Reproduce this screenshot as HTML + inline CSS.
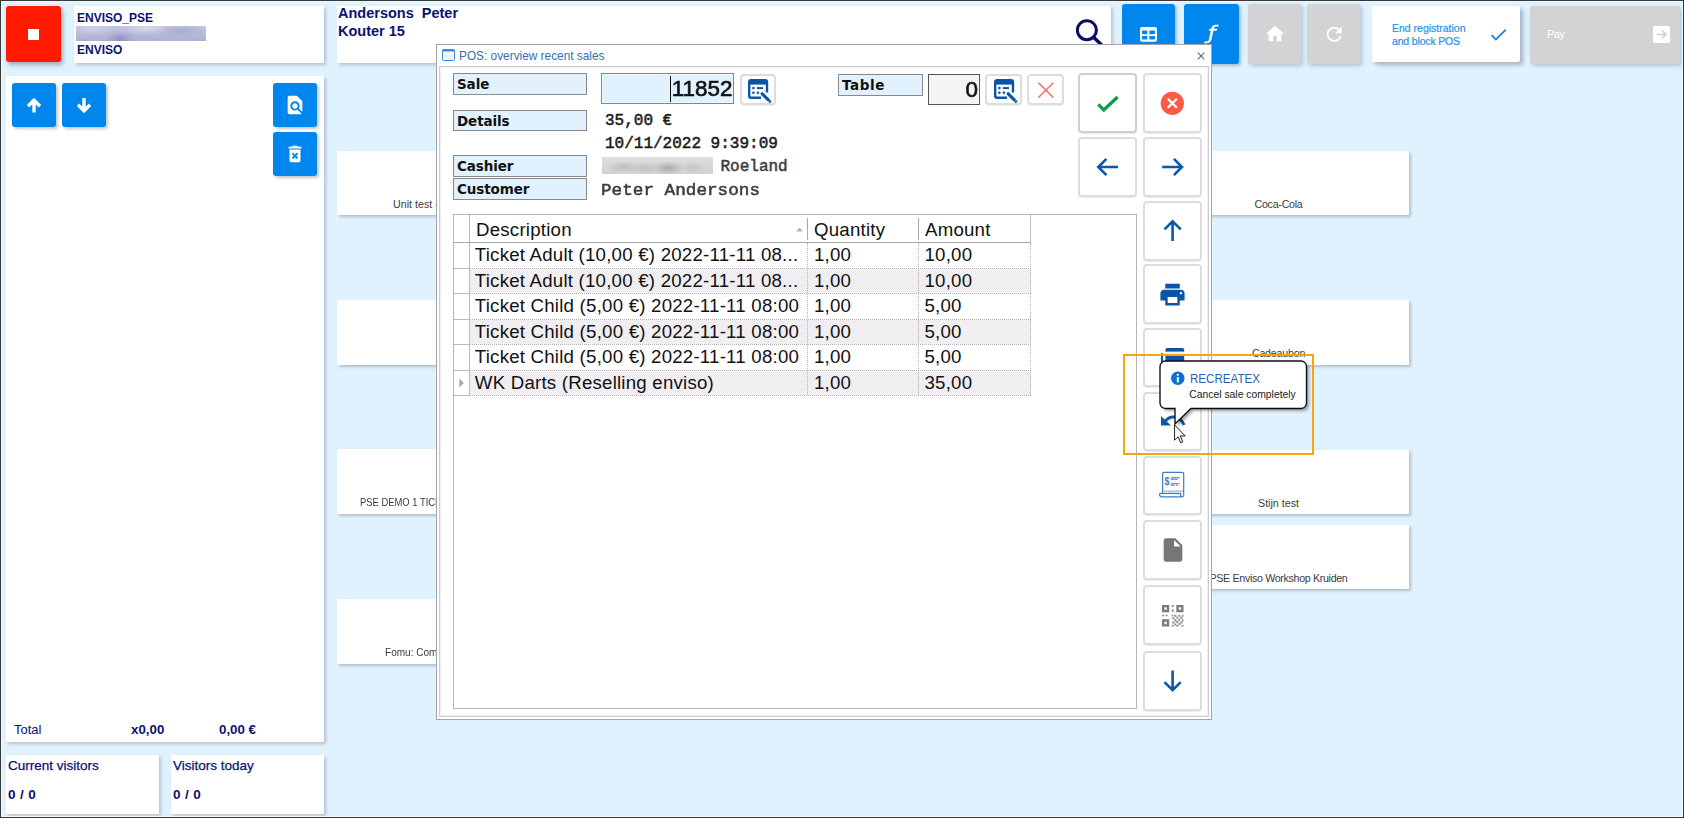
<!DOCTYPE html>
<html lang="en">
<head>
<meta charset="utf-8">
<title>POS: overview recent sales</title>
<style>
html,body{margin:0;padding:0;}
body{width:1684px;height:818px;overflow:hidden;background:#e0f2fe;font-family:"Liberation Sans",sans-serif;position:relative;}
.a{position:absolute;box-sizing:border-box;}
#frame{left:0;top:0;width:1684px;height:818px;border:1px solid #3a3837;box-shadow:inset 0 0 0 1px #eafbff;z-index:50;pointer-events:none;}
.card{background:#fff;box-shadow:2px 2px 3px rgba(80,88,100,.3);}
.bbtn{background:#0087ee;border-radius:3px;box-shadow:2px 2px 3px rgba(60,70,90,.3);}
.gbtn{background:#d3d2d5;border-radius:3px;box-shadow:2px 2px 4px rgba(80,100,130,.32);}
.navy{color:#0b1270;}
.tile{background:#fff;border-radius:1px;box-shadow:2px 2px 3px rgba(80,88,100,.32);font-size:10.700px;color:#3c3c3c;text-align:center;}
.tile span{position:absolute;left:0;right:0;bottom:5px;white-space:nowrap;}
svg{display:block;position:absolute;overflow:visible;}
/* dialog */
#dlg{left:436px;top:44px;width:776px;height:676px;background:#fff;border:1px solid #a2a4ab;}
#dlgin{left:2px;top:21px;width:770px;height:651px;border:1px solid #cdccd0;box-shadow:inset 0 0 0 1px #f0eff1;background:#fff;}
.lbl{background:#e1f2fe;border:1px solid #88888d;font-family:"DejaVu Sans",sans-serif;font-weight:bold;font-size:13.500px;color:#111;padding-left:3px;line-height:21px;white-space:nowrap;letter-spacing:-.1px;}
.mono{font-family:"Liberation Mono",monospace;font-weight:normal;font-size:16px;white-space:pre;color:#1a1a1a;line-height:18px;-webkit-text-stroke:.5px currentColor;}
.sbtn{background:#fff;border:2px solid #dddcdf;border-radius:4px;box-shadow:0 1px 0 rgba(0,0,0,.06);}
.big{background:#fff;border:2px solid #dddcdf;border-radius:4px;box-shadow:0 1px 0 rgba(0,0,0,.08);}
#grid{left:453px;top:214px;width:684px;height:495px;border:1px solid #b6b6b8;background:#fff;}
.gr{font-size:18.670px;color:#111;white-space:nowrap;line-height:25px;letter-spacing:.22px;}
</style>
</head>
<body>
<div class="a" id="frame"></div>
<!-- TOP BAR -->
<div class="a" id="stop" style="left:6px;top:6px;width:55px;height:56px;background:#ff1a00;border-radius:3px;box-shadow:2px 3px 4px rgba(60,70,90,.4);">
  <div class="a" style="left:22px;top:23px;width:11px;height:11px;background:#fff;"></div>
</div>
<div class="a card" style="left:74px;top:6px;width:250px;height:57px;">
  <div class="a navy" style="left:3px;top:5px;font-weight:bold;font-size:12px;line-height:14px;white-space:nowrap;">ENVISO_PSE</div>
  <div class="a" style="left:2px;top:20px;width:130px;height:15px;background:radial-gradient(ellipse 15px 10px at 44px 14px,#9193c1 0%,rgba(145,147,193,0) 100%),radial-gradient(ellipse 22px 7px at 70px 2px,#d8daeb 0%,rgba(216,218,235,0) 100%),radial-gradient(ellipse 20px 6px at 18px 3px,#cfd1e6 0%,rgba(207,209,230,0) 100%),radial-gradient(ellipse 24px 7px at 106px 5px,#a9abd0 0%,rgba(169,171,208,0) 100%),linear-gradient(180deg,#c3c5e0,#aeb0d3);"></div>
  <div class="a navy" style="left:3px;top:37px;font-weight:bold;font-size:12px;line-height:14px;white-space:nowrap;">ENVISO</div>
</div>
<div class="a card" style="left:337px;top:6px;width:774px;height:57px;">
  <div class="a navy" style="left:1px;top:-1px;font-weight:bold;font-size:14.500px;line-height:17.500px;white-space:pre;">Andersons  Peter
Kouter 15</div>
  <svg style="left:735px;top:10px;" width="36" height="36" viewBox="0 0 36 36"><circle cx="14.850" cy="14.200" r="9.500" fill="none" stroke="#0b0b6b" stroke-width="2.950"/><path d="M21.600 21.200 L32 31.200" stroke="#0b0b6b" stroke-width="3.500" fill="none"/></svg>
</div>
<div class="a bbtn" style="left:1122px;top:4px;width:53px;height:60px;">
  <svg style="left:18px;top:23.200px;" width="17" height="15" viewBox="0 0 17 15"><path fill="#fff" fill-rule="evenodd" d="M2 0h13a2 2 0 0 1 2 2v10.700a2 2 0 0 1-2 2H2a2 2 0 0 1-2-2V2a2 2 0 0 1 2-2zM2.100 3.500v3.700h5.200V3.500zM9.400 3.500v3.700h5.500V3.500zM2.100 9v3.600h5.200V9zM9.400 9v3.600h5.500V9z"/></svg>
</div>
<div class="a bbtn" style="left:1184px;top:4px;width:55px;height:60px;">
  <div class="a" id="fl" style="left:18.500px;top:15.500px;width:18px;transform:scaleX(1.3);-webkit-text-stroke:.35px #fff;color:#fff;font-family:'DejaVu Sans',sans-serif;font-style:italic;font-size:17px;line-height:26px;text-align:center;">ƒ</div>
</div>
<div class="a gbtn" style="left:1248px;top:4px;width:53px;height:60px;">
  <svg style="left:15.500px;top:19.300px;" width="22" height="22" viewBox="0 0 24 24"><path fill="#fff" d="M10 20v-6h4v6h5v-8h3L12 3 2 12h3v8z"/></svg>
</div>
<div class="a gbtn" style="left:1307px;top:4px;width:53px;height:60px;">
  <svg style="left:15.500px;top:19.200px;" width="22.500" height="22.500" viewBox="0 0 24 24"><path fill="#fff" d="M17.65 6.35C16.2 4.9 14.21 4 12 4c-4.42 0-7.990 3.580-7.990 8s3.570 8 7.990 8c3.730 0 6.840-2.550 7.730-6h-2.080c-.82 2.330-3.040 4-5.650 4-3.310 0-6-2.690-6-6s2.690-6 6-6c1.660 0 3.140.69 4.220 1.780L13 11h7V4l-2.350 2.350z"/></svg>
</div>
<div class="a" style="left:1372px;top:6px;width:148px;height:56px;background:#fff;border-radius:2px;box-shadow:3px 3px 4px rgba(60,80,110,.38);">
  <div class="a" style="left:20px;top:16.200px;color:#2b8fe6;font-size:10.500px;line-height:13px;white-space:pre;-webkit-text-stroke:.2px #2b8fe6;">End registration
<span style="letter-spacing:-.16px;">and block POS</span></div>
  <svg style="left:116px;top:18px;" width="21" height="21" viewBox="0 0 24 24"><path fill="#1c7fe0" d="M9 16.170L4.830 12l-1.420 1.410L9 19 21 7l-1.410-1.410z"/></svg>
</div>
<div class="a gbtn" style="left:1530px;top:6px;width:150px;height:58px;">
  <div class="a" style="left:17px;top:22px;color:#fff;font-size:11px;line-height:13px;letter-spacing:-.6px;">Pay</div>
  <svg style="left:123px;top:20px;" width="17" height="17" viewBox="0 0 17 17"><rect width="17" height="17" rx="1.500" fill="#fff"/><path d="M3.500 8.500H13M9 4.500l4 4-4 4" stroke="#cfcfd2" stroke-width="1.600" fill="none"/></svg>
</div>

<!-- LEFT PANEL -->
<div class="a card" style="left:6px;top:76px;width:318px;height:666px;">
  <div class="a bbtn" style="left:6px;top:7px;width:44px;height:44px;">
    <svg style="left:0;top:0;" width="44" height="44" viewBox="0 0 44 44"><path d="M22 36.500V23.500M16 30.200L22 24.200l6 6" transform="translate(0,-7)" stroke="#fff" stroke-width="3.400" fill="none"/></svg>
  </div>
  <div class="a bbtn" style="left:56px;top:7px;width:44px;height:44px;">
    <svg style="left:0;top:0;" width="44" height="44" viewBox="0 0 44 44"><path d="M22 15v13M16 21.800L22 27.800l6-6" stroke="#fff" stroke-width="3.400" fill="none"/></svg>
  </div>
  <div class="a bbtn" style="left:267px;top:7px;width:44px;height:44px;">
    <svg style="left:11px;top:11px;" width="22" height="22" viewBox="0 0 24 24"><path fill="#fff" d="M20 19.590V8l-6-6H6c-1.100 0-1.990.9-1.990 2L4 20c0 1.100.89 2 1.990 2H18c.45 0 .85-.15 1.190-.4l-4.430-4.430c-.8.52-1.740.83-2.760.83-2.760 0-5-2.240-5-5s2.240-5 5-5 5 2.240 5 5c0 1.020-.31 1.960-.83 2.750L20 19.590zM9 13c0 1.660 1.340 3 3 3s3-1.340 3-3-1.340-3-3-3-3 1.340-3 3z"/></svg>
  </div>
  <div class="a bbtn" style="left:267px;top:56px;width:44px;height:44px;">
    <svg style="left:11px;top:11px;" width="22" height="22" viewBox="0 0 24 24"><path fill="#fff" d="M6 19c0 1.100.9 2 2 2h8c1.100 0 2-.9 2-2V7H6v12zm2.460-7.120l1.410-1.410L12 12.590l2.120-2.120 1.410 1.410L13.410 14l2.120 2.120-1.410 1.410L12 15.410l-2.120 2.120-1.410-1.410L10.590 14l-2.130-2.120zM15.500 4l-1-1h-5l-1 1H5v2h14V4z"/></svg>
  </div>
  <div class="a navy" style="left:8px;top:646px;font-size:13px;line-height:16px;">Total</div>
  <div class="a navy" style="left:125px;top:645.500px;font-size:13.300px;font-weight:bold;line-height:16px;">x0,00</div>
  <div class="a navy" style="left:213px;top:645.500px;font-size:13.300px;font-weight:bold;line-height:16px;">0,00 €</div>
</div>
<div class="a card" style="left:6px;top:755px;width:153px;height:59px;">
  <div class="a navy" style="left:2px;top:2px;font-size:13.500px;line-height:17px;white-space:nowrap;-webkit-text-stroke:.25px #0b1270;">Current visitors</div>
  <div class="a navy" style="left:2px;top:32px;font-size:13.500px;font-weight:bold;line-height:16px;word-spacing:0;letter-spacing:.35px;">0 / 0</div>
</div>
<div class="a card" style="left:171px;top:755px;width:153px;height:59px;">
  <div class="a navy" style="left:2px;top:2px;font-size:13.500px;line-height:17px;white-space:nowrap;-webkit-text-stroke:.25px #0b1270;">Visitors today</div>
  <div class="a navy" style="left:2px;top:32px;font-size:13.500px;font-weight:bold;line-height:16px;word-spacing:0;letter-spacing:.35px;">0 / 0</div>
</div>

<!-- TILES -->
<div class="a tile" style="left:337px;top:151px;width:150px;height:64px;"><span style="left:56px;right:auto;">Unit test (PSE)</span></div>
<div class="a tile" style="left:337px;top:300px;width:150px;height:65px;"></div>
<div class="a tile" style="left:337px;top:449px;width:150px;height:65px;"><span style="left:23.300px;right:auto;bottom:5.700px;font-size:11.200px;transform-origin:0 50%;transform:scaleX(.84);">PSE DEMO 1 TICKET</span></div>
<div class="a tile" style="left:337px;top:599px;width:150px;height:65px;"><span style="left:47.500px;right:auto;bottom:6.300px;transform-origin:0 50%;transform:scaleX(.94);">Fomu: Combi ticket</span></div>
<div class="a tile" style="left:1148px;top:151px;width:261px;height:64px;"><span style="letter-spacing:-.27px;">Coca-Cola</span></div>
<div class="a tile" style="left:1148px;top:300px;width:261px;height:65px;"><span style="letter-spacing:-.23px;bottom:6px;">Cadeaubon</span></div>
<div class="a tile" style="left:1148px;top:450px;width:261px;height:64px;"><span>Stijn test</span></div>
<div class="a tile" style="left:1148px;top:525px;width:261px;height:64px;"><span style="letter-spacing:-.34px;">PSE Enviso Workshop Kruiden</span></div>

<!-- DIALOG -->
<div class="a" id="dlg">
  <svg style="left:5px;top:4px;" width="13" height="12" viewBox="0 0 13 12"><rect x=".5" y=".5" width="12" height="11" rx="1" fill="#f4f4ff" stroke="#3c8ee0"/><rect x=".5" y=".5" width="12" height="2" fill="#3c8ee0"/></svg>
  <div class="a" style="left:22px;top:4px;font-size:11.850px;line-height:15px;color:#3a6ea8;white-space:nowrap;">POS: overview recent sales</div>
  <svg style="left:760px;top:6.500px;" width="8" height="8" viewBox="0 0 8 8"><path d="M.7.7l6.600 6.600M7.300.7L.7 7.300" stroke="#666" stroke-width="1.100" fill="none"/></svg>
  <div class="a" id="dlgin"></div>
</div>
<!-- dialog contents in page coordinates -->
<div class="a lbl" style="left:453px;top:73px;width:134px;height:22px;">Sale</div>
<div class="a lbl" style="left:453px;top:110px;width:134px;height:21px;">Details</div>
<div class="a lbl" style="left:453px;top:155px;width:134px;height:22px;">Cashier</div>
<div class="a lbl" style="left:453px;top:178px;width:134px;height:22px;">Customer</div>
<div class="a" style="left:601px;top:73px;width:133px;height:31px;background:#e1f2fe;border:1px solid #4a92dc;box-shadow:inset 0 0 0 1px #eefaff;"></div>
<div class="a" style="left:670px;top:76px;width:1px;height:26px;background:#111;"></div>
<div class="a" style="left:640px;top:75px;width:92.500px;text-align:right;font-size:22px;line-height:27px;color:#111;transform-origin:100% 50%;transform:scaleX(1.02);-webkit-text-stroke:.6px #111;">11852</div>
<div class="a sbtn" style="left:740px;top:74px;width:36px;height:31px;"></div>
<div class="a mono" style="left:605px;top:111.500px;">35,00 €</div>
<div class="a mono" style="left:605px;top:134.500px;">10/11/2022 9:39:09</div>
<div class="a" style="left:602px;top:157px;width:111px;height:17px;background:radial-gradient(ellipse 16px 7px at 66px 11px,#a9a9a9 0%,rgba(169,169,169,0) 100%),radial-gradient(ellipse 18px 6px at 22px 10px,#bcbcbc 0%,rgba(188,188,188,0) 100%),radial-gradient(ellipse 14px 6px at 44px 11px,#c0c0c0 0%,rgba(192,192,192,0) 100%),radial-gradient(ellipse 14px 6px at 90px 10px,#c6c6c6 0%,rgba(198,198,198,0) 100%),linear-gradient(180deg,#dedede,#d2d2d2);"></div>
<div class="a mono" style="left:720.500px;top:158px;color:#3c3c3c;">Roeland</div>
<div class="a mono" style="left:601px;top:181.500px;color:#3c3c3c;transform-origin:0 0;transform:scaleX(1.104);">Peter Andersons</div>
<div class="a lbl" style="left:838px;top:74px;width:85px;height:22px;letter-spacing:.6px;">Table</div>
<div class="a" style="left:928px;top:74px;width:52px;height:31px;background:#f4f3f6;border:1px solid #555;"></div>
<div class="a" style="left:930px;top:76px;width:48px;text-align:right;font-size:22px;line-height:27px;color:#111;transform-origin:100% 50%;transform:scaleX(1.02);-webkit-text-stroke:.6px #111;">0</div>
<div class="a sbtn" style="left:985px;top:74px;width:37px;height:31px;"></div>
<div class="a sbtn" style="left:1027px;top:74px;width:37px;height:31px;"></div>

<!-- GRID -->
<div class="a" id="grid"></div>
<!--GRIDSTART-->
<div class="a gr" style="left:476px;top:216.7px;line-height:26px;">Description</div>
<div class="a gr" style="left:814px;top:216.7px;line-height:26px;">Quantity</div>
<div class="a gr" style="left:925px;top:216.7px;line-height:26px;">Amount</div>
<svg style="left:796px;top:227px;" width="7" height="5" viewBox="0 0 7 5"><path d="M0 4.500L3.500 .5 7 4.500z" fill="#b5b5b5"/></svg>
<div class="a" style="left:469px;top:215px;width:1px;height:28px;background:#bababc;"></div>
<div class="a" style="left:807px;top:218px;width:1px;height:22px;background:#a8a8aa;"></div>
<div class="a" style="left:918px;top:218px;width:1px;height:22px;background:#a8a8aa;"></div>
<div class="a" style="left:1030px;top:215px;width:1px;height:28px;background:#bababc;"></div>
<div class="a" style="left:454px;top:242px;width:577px;height:1px;background:#a8a8aa;"></div>
<div class="a" style="left:470px;top:243px;width:561px;height:25px;background:#fff;"></div>
<div class="a gr" style="left:474.800px;top:242.3px;height:25px;width:331px;overflow:hidden;">Ticket Adult (10,00 €) 2022-11-11 08...</div>
<div class="a gr" style="left:814px;top:242.3px;height:25px;">1,00</div>
<div class="a gr" style="left:924.500px;top:242.3px;height:25px;">10,00</div>
<div class="a" style="left:454px;top:268px;width:16px;height:1px;background:#bababc;"></div>
<div class="a" style="left:470px;top:268px;width:561px;height:0;border-top:1px dotted #b2b2b4;"></div>
<div class="a" style="left:470px;top:269px;width:561px;height:24px;background:#f0eef1;"></div>
<div class="a gr" style="left:474.800px;top:267.8px;height:24px;width:331px;overflow:hidden;">Ticket Adult (10,00 €) 2022-11-11 08...</div>
<div class="a gr" style="left:814px;top:267.8px;height:24px;">1,00</div>
<div class="a gr" style="left:924.500px;top:267.8px;height:24px;">10,00</div>
<div class="a" style="left:454px;top:293px;width:16px;height:1px;background:#bababc;"></div>
<div class="a" style="left:470px;top:293px;width:561px;height:0;border-top:1px dotted #b2b2b4;"></div>
<div class="a" style="left:470px;top:294px;width:561px;height:25px;background:#fff;"></div>
<div class="a gr" style="left:474.800px;top:293.3px;height:25px;width:331px;overflow:hidden;">Ticket Child (5,00 €) 2022-11-11 08:00</div>
<div class="a gr" style="left:814px;top:293.3px;height:25px;">1,00</div>
<div class="a gr" style="left:924.500px;top:293.3px;height:25px;">5,00</div>
<div class="a" style="left:454px;top:319px;width:16px;height:1px;background:#bababc;"></div>
<div class="a" style="left:470px;top:319px;width:561px;height:0;border-top:1px dotted #b2b2b4;"></div>
<div class="a" style="left:470px;top:320px;width:561px;height:24px;background:#f0eef1;"></div>
<div class="a gr" style="left:474.800px;top:318.8px;height:24px;width:331px;overflow:hidden;">Ticket Child (5,00 €) 2022-11-11 08:00</div>
<div class="a gr" style="left:814px;top:318.8px;height:24px;">1,00</div>
<div class="a gr" style="left:924.500px;top:318.8px;height:24px;">5,00</div>
<div class="a" style="left:454px;top:344px;width:16px;height:1px;background:#bababc;"></div>
<div class="a" style="left:470px;top:344px;width:561px;height:0;border-top:1px dotted #b2b2b4;"></div>
<div class="a" style="left:470px;top:345px;width:561px;height:25px;background:#fff;"></div>
<div class="a gr" style="left:474.800px;top:344.3px;height:25px;width:331px;overflow:hidden;">Ticket Child (5,00 €) 2022-11-11 08:00</div>
<div class="a gr" style="left:814px;top:344.3px;height:25px;">1,00</div>
<div class="a gr" style="left:924.500px;top:344.3px;height:25px;">5,00</div>
<div class="a" style="left:454px;top:370px;width:16px;height:1px;background:#bababc;"></div>
<div class="a" style="left:470px;top:370px;width:561px;height:0;border-top:1px dotted #b2b2b4;"></div>
<div class="a" style="left:470px;top:371px;width:561px;height:24px;background:#f0eef1;"></div>
<div class="a gr" style="left:474.800px;top:369.8px;height:24px;width:331px;overflow:hidden;">WK Darts (Reselling enviso)</div>
<div class="a gr" style="left:814px;top:369.8px;height:24px;">1,00</div>
<div class="a gr" style="left:924.500px;top:369.8px;height:24px;">35,00</div>
<div class="a" style="left:454px;top:395px;width:16px;height:1px;background:#bababc;"></div>
<div class="a" style="left:470px;top:395px;width:561px;height:0;border-top:1px dotted #b2b2b4;"></div>
<div class="a" style="left:469px;top:243px;width:1px;height:153px;background:#bababc;"></div>
<div class="a" style="left:807px;top:243px;width:0;height:152px;border-left:1px dotted #b2b2b4;"></div>
<div class="a" style="left:918px;top:243px;width:0;height:152px;border-left:1px dotted #b2b2b4;"></div>
<div class="a" style="left:1030px;top:243px;width:0;height:152px;border-left:1px dotted #b2b2b4;"></div>
<svg style="left:459px;top:377.500px;" width="5" height="10" viewBox="0 0 5 10"><path d="M.3 .5L4.800 5 .3 9.500z" fill="#a8a8a8"/></svg>
<!--GRIDEND-->
<!--BTNSTART-->
<!-- small icon buttons -->
<svg style="left:740px;top:74px;" width="36" height="31" viewBox="0 0 36 31"><g id="gsearch" fill="none" stroke="#0a55a5"><path d="M27 18.500V8.300a2 2 0 0 0-2-2H11.200a2 2 0 0 0-2 2V21.800a2 2 0 0 0 2 2H21" stroke-width="2.400"/><path d="M9.200 8.300H27" stroke-width="4.600"/><path d="M16.800 14.100H23" stroke-width="2"/><circle cx="13.400" cy="14.100" r="1.300" fill="#0a55a5" stroke="none"/><circle cx="13.400" cy="18.700" r="1.300" fill="#0a55a5" stroke="none"/><circle cx="17.900" cy="18.700" r="1.300" fill="#0a55a5" stroke="none"/><path d="M22.200 19.800L28.300 25.800" stroke-width="3.200" stroke-linecap="round"/><path d="M29.500 27L30.700 28.200" stroke-width="3"/></g></svg>
<svg style="left:985.500px;top:74px;" width="36" height="31" viewBox="0 0 36 31"><use href="#gsearch"/></svg>
<svg style="left:1027px;top:74px;" width="37" height="31" viewBox="0 0 37 31"><path d="M11.400 8.800L26.400 23.600M26.400 8.800L11.400 23.600" stroke="#f26a58" stroke-width="1.400" fill="none"/></svg>

<!-- big buttons -->
<div class="a big" style="left:1078px;top:73px;width:59px;height:60px;border-color:#cfced2;"></div>
<div class="a big" style="left:1143px;top:73px;width:59px;height:60px;"></div>
<div class="a big" style="left:1078px;top:137px;width:59px;height:60px;"></div>
<div class="a big" style="left:1143px;top:137px;width:59px;height:60px;"></div>
<div class="a big" style="left:1143px;top:201px;width:59px;height:60px;"></div>
<div class="a big" style="left:1143px;top:264px;width:59px;height:60px;"></div>
<div class="a big" style="left:1143px;top:328px;width:59px;height:59px;"></div>
<div class="a big" style="left:1143px;top:392px;width:59px;height:59px;"></div>
<div class="a big" style="left:1143px;top:456px;width:59px;height:59px;"></div>
<div class="a big" style="left:1143px;top:520px;width:59px;height:60px;"></div>
<div class="a big" style="left:1143px;top:585px;width:59px;height:60px;"></div>
<div class="a big" style="left:1143px;top:651px;width:59px;height:60px;"></div>
<!-- icons in page coords -->
<svg style="left:0;top:0;" width="1684" height="818" viewBox="0 0 1684 818">
  <path d="M1098.300 104.300L1103.800 110 1117.600 97" stroke="#0c9b49" stroke-width="3.200" fill="none"/>
  <circle cx="1172.300" cy="103.300" r="11.600" fill="#fb5a49"/>
  <path d="M1167.800 98.800l9 9M1176.800 98.800l-9 9" stroke="#fff" stroke-width="2.300" fill="none"/>
  <g stroke="#0a58a6" stroke-width="2.600" fill="none">
    <path d="M1118.100 167H1098.500M1106.400 158.900L1098.300 167l8.100 8.100"/>
    <path d="M1162.200 167H1181.800M1173.900 158.900L1182 167l-8.100 8.100"/>
    <path d="M1172.600 241V221.500M1164.500 229.400L1172.600 221.300l8.100 8.100"/>
    <path d="M1172.600 670.400V690M1164.500 682.100L1172.600 690.200l8.100-8.100"/>
  </g>
</svg>
<svg style="left:1158px;top:279.700px;" width="29" height="29" viewBox="0 0 24 24"><path fill="#0a55a5" d="M19 8H5c-1.660 0-3 1.340-3 3v6h4v4h12v-4h4v-6c0-1.660-1.340-3-3-3zm-3 11H8v-5h8v5zm3-7c-.55 0-1-.45-1-1s.45-1 1-1 1 .45 1 1-.45 1-1 1zm-1-9H6v4h12V3z"/></svg>
<!-- card icon (partly hidden) -->
<svg style="left:1160px;top:347px;" width="26" height="22" viewBox="1160 347 26 22"><path d="M1165.400 351.800V349.900A1.800 1.800 0 0 1 1167.200 348.100H1182.400A1.800 1.800 0 0 1 1184.200 349.900V351.800z" fill="#0a55a5"/><rect x="1165.400" y="351.800" width="18.800" height="2.600" fill="#e6f5ff"/><rect x="1165.400" y="354.400" width="18.800" height="10" fill="#0a55a5"/><rect x="1161" y="353" width="2" height="11" rx=".8" fill="#0a55a5"/></svg>
<!-- undo icon -->
<svg style="left:1158px;top:410px;" width="30" height="24" viewBox="0 0 30 24"><path d="M3 5.900V15.400H12.900z" fill="#0a58a6"/><path d="M7.500 11.200C11.500 5.300 21.500 4.800 26 15" stroke="#0a58a6" stroke-width="3" fill="none"/></svg>
<!-- receipt icon -->
<svg style="left:1158px;top:471px;" width="28" height="28" viewBox="0 0 28 28"><g fill="none" stroke="#3f7cc0" stroke-width="1.200"><path d="M4.600 22.400V2.800A1.500 1.500 0 0 1 6.100 1.300H24.200A1.500 1.500 0 0 1 25.700 2.800V24" fill="#fff"/><path d="M1.600 22.400H22.600V24.200A1.550 1.550 0 0 0 25.700 24.200" fill="#d4eaff"/><path d="M1.600 22.400V23.600A2.200 2.200 0 0 0 3.800 25.800H24.300" /><path d="M6.300 20.100H25" stroke-dasharray="1.100 .9" stroke-width="1.300"/><path d="M12.800 6.700H21.700M12.800 8.300H19.500M12.800 12.700H21.700M12.800 14.200H16.500M17.800 14.200H19.500" stroke-width="1.100"/></g><text x="6.600" y="14.300" font-family="Liberation Sans, sans-serif" font-size="10.500" font-weight="bold" fill="#3f7cc0" textLength="5" lengthAdjust="spacingAndGlyphs">$</text></svg>
<!-- doc icon -->
<svg style="left:1158.700px;top:535.900px;" width="28" height="28" viewBox="0 0 24 24"><path fill="#767676" d="M6 2c-1.100 0-1.990.9-1.990 2L4 20c0 1.100.89 2 1.990 2H18c1.100 0 2-.9 2-2V8l-6-6H6zm7 7V3.500L18.500 9H13z"/></svg>
<!-- QR icon -->
<svg style="left:1161.700px;top:604.800px;" width="21.500" height="21.500" viewBox="0 0 21 21"><g fill="#7a7a7a"><path fill-rule="evenodd" d="M0 0h7v7H0zM2.300 2.300v2.400h2.400V2.300zM14 0h7v7h-7zM16.300 2.300v2.400h2.400V2.300zM0 14h7v7H0zM2.300 16.300v2.400h2.400v-2.400z"/><path d="M9.500 0h2v2h-2zM9.500 4.500h2v2h-2zM0 9.500h2v1.500H0zM3.500 9.500h2v1.500h-2zM9.500 9.500h1.500v1.500H9.500zM12 9.500h2v2h-2zM16 9.500h2v2h-2zM19.500 9.500H21v2h-1.500zM10 12h2v2h-2zM14 11.500h2v2h-2zM18 11.500h2v2h-2zM12 14h2v2h-2zM16 13.500h2v2h-2zM19.500 14H21v2h-1.500zM10 16h2v2h-2zM14 15.500h2v2h-2zM18 16h2v2h-2zM12 18h2v2h-2zM16 17.500h2v2h-2zM9.500 19.500h2V21h-2zM14 19.500h2V21h-2zM19 19.500h2V21h-2z" opacity=".85"/></g></svg>

<!-- orange highlight -->
<div class="a" style="left:1123px;top:354px;width:191px;height:101px;border:2px solid #f5a60c;z-index:5;"></div>
<!-- tooltip balloon -->
<svg style="left:1150px;top:350px;z-index:6;" width="170" height="90" viewBox="1150 350 170 90">
  <defs><filter id="sh" x="-10%" y="-10%" width="130%" height="140%"><feGaussianBlur stdDeviation="1.800"/></filter></defs>
  <path d="M1165.500 361h135.500a5.500 5.500 0 0 1 5.500 5.500v36.500a5.500 5.500 0 0 1-5.500 5.500H1191L1175 424V408.500h-9.500a5.500 5.500 0 0 1-5.500-5.500v-36.500a5.500 5.500 0 0 1 5.500-5.500z" transform="translate(2.500,2.500)" fill="#000" opacity=".33" filter="url(#sh)"/>
  <path d="M1165.500 361h135.500a5.500 5.500 0 0 1 5.500 5.500v36.500a5.500 5.500 0 0 1-5.500 5.500H1191L1175 424V408.500h-9.500a5.500 5.500 0 0 1-5.500-5.500v-36.500a5.500 5.500 0 0 1 5.500-5.500z" fill="#fff" stroke="#0c0c0c" stroke-width="1.350"/>
  <circle cx="1177.800" cy="378.300" r="6.700" fill="#0b6fd3"/>
  <rect x="1176.800" y="377" width="2" height="5.400" fill="#fff"/><circle cx="1177.800" cy="374.800" r="1.150" fill="#fff"/>
  <text x="1190" y="383" font-family="Liberation Sans, sans-serif" font-size="12.300" fill="#2c5fb3" textLength="70" lengthAdjust="spacingAndGlyphs">RECREATEX</text>
  <text x="1189.300" y="398.300" font-family="Liberation Sans, sans-serif" font-size="10.500" fill="#1a1a1a" textLength="106.500" lengthAdjust="spacingAndGlyphs">Cancel sale completely</text>
</svg>
<!-- mouse cursor -->
<svg style="left:1174.200px;top:423.500px;z-index:7;" width="13.300" height="20" viewBox="0 0 14 21"><path d="M.6 .8V17l3.700-3.500 2.700 6.200 2.300-1-2.700-6.100H11.800z" fill="#fff" stroke="#111" stroke-width="1" stroke-linejoin="miter"/></svg>
<!--BTNEND-->

</body>
</html>
